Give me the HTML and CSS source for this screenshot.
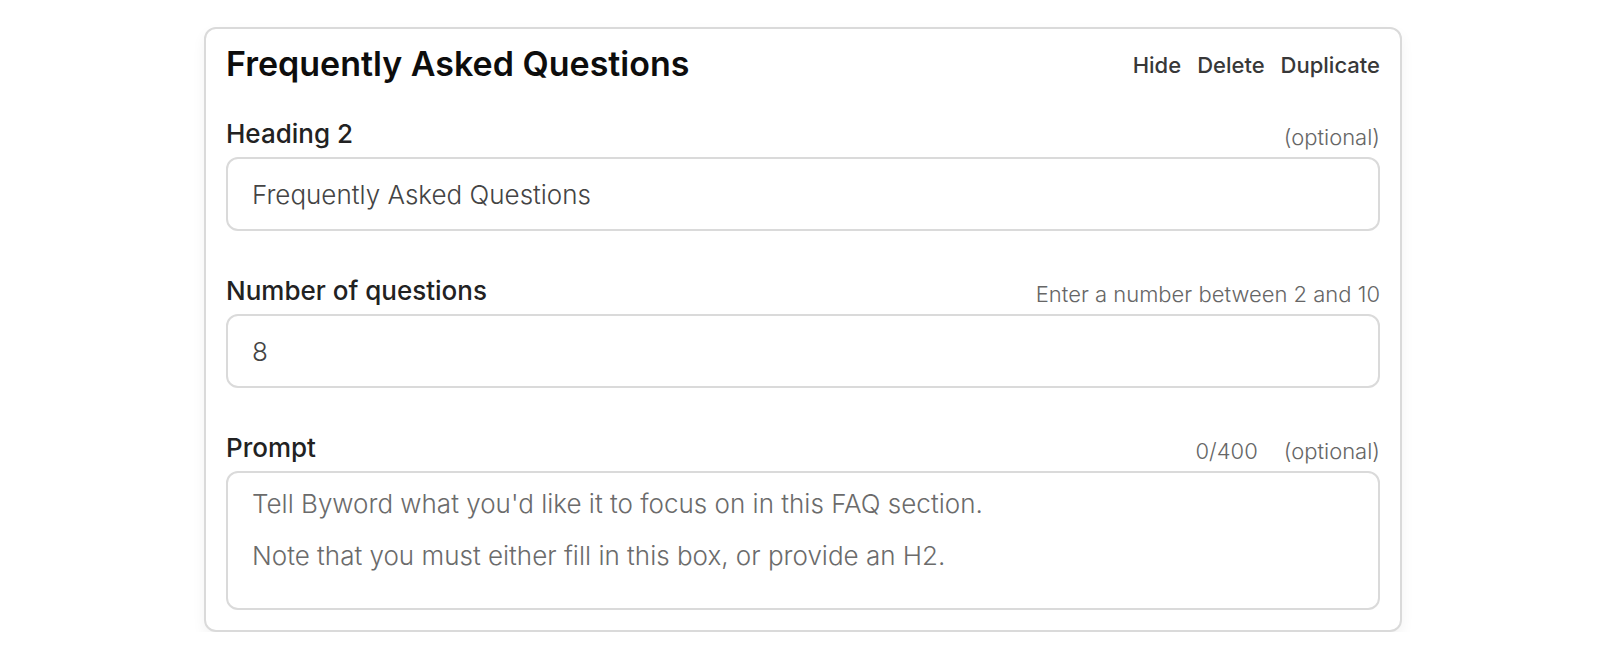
FILE: index.html
```html
<!DOCTYPE html>
<html lang="en">
<head>
<meta charset="utf-8">
<title>FAQ section</title>
<link rel="stylesheet" href="styles.css">
</head>
<body>
<section class="card">
  <header class="card-head">
    <h2 class="card-title">Frequently Asked Questions</h2>
    <nav class="actions">
      <button class="action">Hide</button>
      <button class="action">Delete</button>
      <button class="action">Duplicate</button>
    </nav>
  </header>

  <div class="field field-first">
    <div class="field-head">
      <label class="label" for="h2">Heading 2</label>
      <span class="hint">(optional)</span>
    </div>
    <input class="input" id="h2" type="text" value="Frequently Asked Questions">
  </div>

  <div class="field">
    <div class="field-head">
      <label class="label" for="num">Number of questions</label>
      <span class="hint">Enter a number between 2 and 10</span>
    </div>
    <input class="input" id="num" type="text" value="8">
  </div>

  <div class="field">
    <div class="field-head">
      <label class="label" for="prompt">Prompt</label>
      <span class="hints"><span class="hint">0/400</span><span class="hint">(optional)</span></span>
    </div>
    <textarea class="textarea" id="prompt" placeholder="Tell Byword what you'd like it to focus on in this FAQ section.&#10;&#10;Note that you must either fill in this box, or provide an H2."></textarea>
  </div>
</section>
</body>
</html>
```

FILE: styles.css
```css
* { box-sizing: border-box; }

body {
  margin: 0;
  background: #ffffff;
  font-family: Inter, "Noto Sans", sans-serif;
  color: #111;
}

.card {
  width: 1198px;
  margin: 27px auto 0;
  background: #fff;
  border: 2px solid #dadada;
  border-radius: 12px;
  padding: 15px 20px 20px;
  box-shadow: 0 6px 14px rgba(0, 0, 0, 0.05);
}

.card-head {
  display: flex;
  justify-content: space-between;
  align-items: center;
  height: 40px;
}

.card-title {
  margin: 0;
  font-size: 34px;
  font-weight: 600;
  line-height: 40px;
  color: #0d0d0d;
}

.actions {
  display: flex;
  gap: 16px;
  padding-top: 2px;
}

.action {
  border: 0;
  background: none;
  padding: 0;
  font-family: inherit;
  font-size: 22px;
  font-weight: 500;
  line-height: normal;
  color: #383838;
  cursor: pointer;
}

.field { margin-top: 44px; }
.field-first { margin-top: 34px; }

.field-head {
  display: flex;
  justify-content: space-between;
  align-items: flex-end;
  margin-bottom: 7px;
}

.label {
  font-size: 26px;
  font-weight: 500;
  line-height: 32px;
  color: #222;
}

.hints {
  display: flex;
  gap: 26px;
}

.hint {
  font-size: 22px;
  font-weight: 300;
  line-height: 25px;
  color: #666;
}

.input,
.textarea {
  display: block;
  width: 100%;
  border: 2px solid #dadada;
  border-radius: 12px;
  background: #fff;
  font-family: inherit;
  font-size: 26px;
  font-weight: 300;
  color: #444;
  outline: none;
}

.input {
  height: 74px;
  padding: 0 24px;
}

.textarea {
  height: 139px;
  padding: 18px 24px;
  line-height: 26px;
  resize: none;
}

.textarea::placeholder {
  color: #6b6b6b;
  opacity: 1;
}
```
